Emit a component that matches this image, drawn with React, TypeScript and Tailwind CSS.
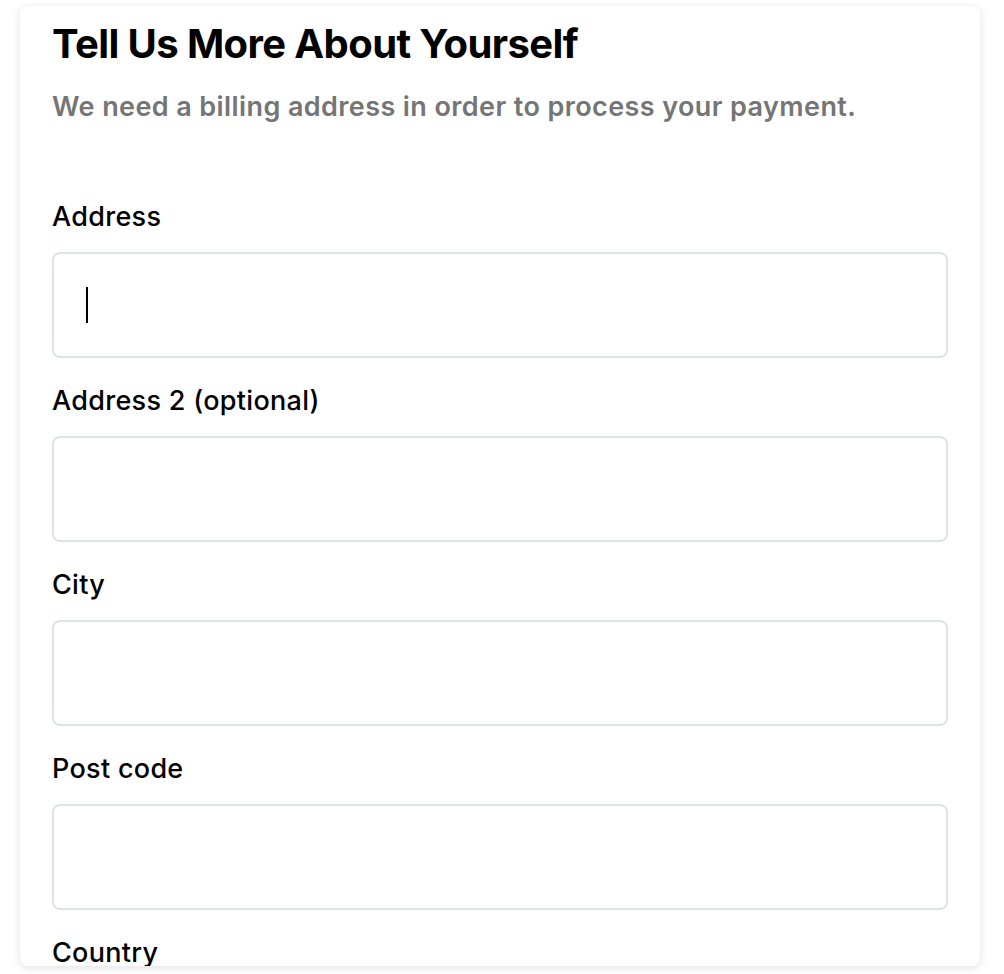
import React from 'react';

const fields = [
  { label: 'Address', focused: true },
  { label: 'Address 2 (optional)' },
  { label: 'City' },
  { label: 'Post code' },
  { label: 'Country' },
];

const Field = ({ label, focused }: { label: string; focused?: boolean }) => (
  <div className="mb-[27px]">
    <label className="block text-[27px] leading-8 font-medium tracking-[0.3px] text-black mb-[19px]">
      {label}
    </label>
    <div className="h-[106px] w-full rounded-lg border-2 border-[#dde3ea] bg-white flex items-center pl-[32px]">
      {focused && <span className="block w-[2px] h-[36px] bg-black" />}
    </div>
  </div>
);

export default function App() {
  return (
    <div className="min-h-screen bg-white pt-[6px] pl-[20px] font-['Inter','Noto_Sans',sans-serif]">
      <div className="w-[960px] h-[960px] overflow-hidden rounded-lg bg-white shadow-[0_2px_10px_rgba(0,0,0,0.12)] px-8 pt-[14px]">
        <h1 className="text-[40px] leading-[48px] font-bold text-black tracking-[-0.6px]">
          Tell Us More About Yourself
        </h1>
        <p className="mt-[23px] text-[27px] leading-8 font-semibold tracking-[0.4px] text-[#757575]">
          We need a billing address in order to process your payment.
        </p>
        <div className="mt-[78px]">
          {fields.map((f) => (
            <Field key={f.label} label={f.label} focused={f.focused} />
          ))}
        </div>
      </div>
    </div>
  );
}
